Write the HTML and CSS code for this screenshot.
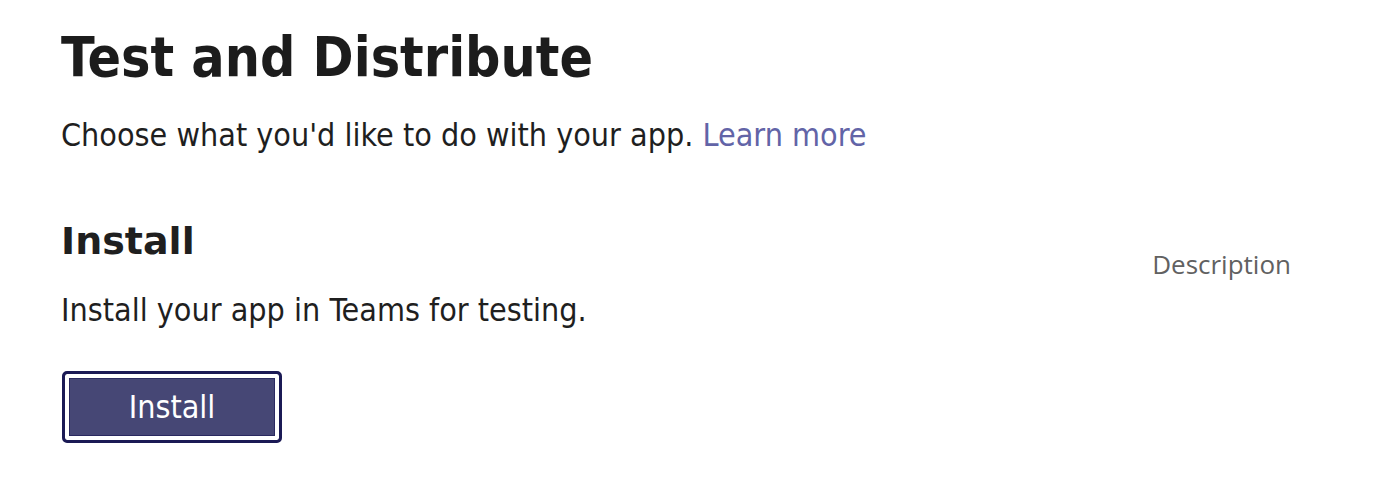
FILE: index.html
```html
<!DOCTYPE html>
<html>
<head>
<meta charset="utf-8">
<link rel="stylesheet" href="styles.css">
</head>
<body>
<div class="page">
  <div class="main">
    <h1 class="title">Test and Distribute</h1>
    <p class="lead">Choose what you'd like to do with your app. <a class="link" href="#">Learn more</a></p>
    <h2 class="section-title">Install</h2>
    <p class="section-text">Install your app in Teams for testing.</p>
    <button class="btn">Install</button>
  </div>
  <div class="side">Description</div>
</div>
</body>
</html>
```

FILE: styles.css
```css
html, body {
  margin: 0;
  padding: 0;
  background: #ffffff;
}
.page {
  display: flex;
  justify-content: space-between;
  padding: 22px 109px 0 61px;
  font-family: "DejaVu Sans Condensed", "DejaVu Sans", sans-serif;
  color: #1f1f1f;
}
.main {
  display: flex;
  flex-direction: column;
  align-items: flex-start;
}
.title {
  margin: 0;
  font-size: 55px;
  font-weight: bold;
  line-height: 70px;
  color: #1c1c1c;
}
.lead {
  margin: 23px 0 0 0;
  font-size: 32px;
  line-height: 40px;
}
.link {
  color: #6264a7;
  text-decoration: none;
}
.section-title {
  margin: 62px 0 0 0;
  font-family: "DejaVu Sans", sans-serif;
  font-size: 38px;
  font-weight: bold;
  line-height: 48px;
}
.section-text {
  margin: 25px 0 0 0;
  font-size: 32px;
  line-height: 40px;
}
.btn {
  margin-top: 41px;
  margin-left: 1px;
  width: 220px;
  height: 72px;
  box-sizing: border-box;
  border: 3px solid #1b1a55;
  border-radius: 5px;
  background: #464775;
  box-shadow: inset 0 0 0 4px #ffffff, inset 0 0 0 5px #2a2960;
  color: #ffffff;
  font-family: "DejaVu Sans Condensed", "DejaVu Sans", sans-serif;
  font-size: 32px;
  padding: 0;
}
.side {
  margin-top: 224px;
  font-family: "Open Sans", sans-serif;
  font-size: 26px;
  color: #616161;
}
```
